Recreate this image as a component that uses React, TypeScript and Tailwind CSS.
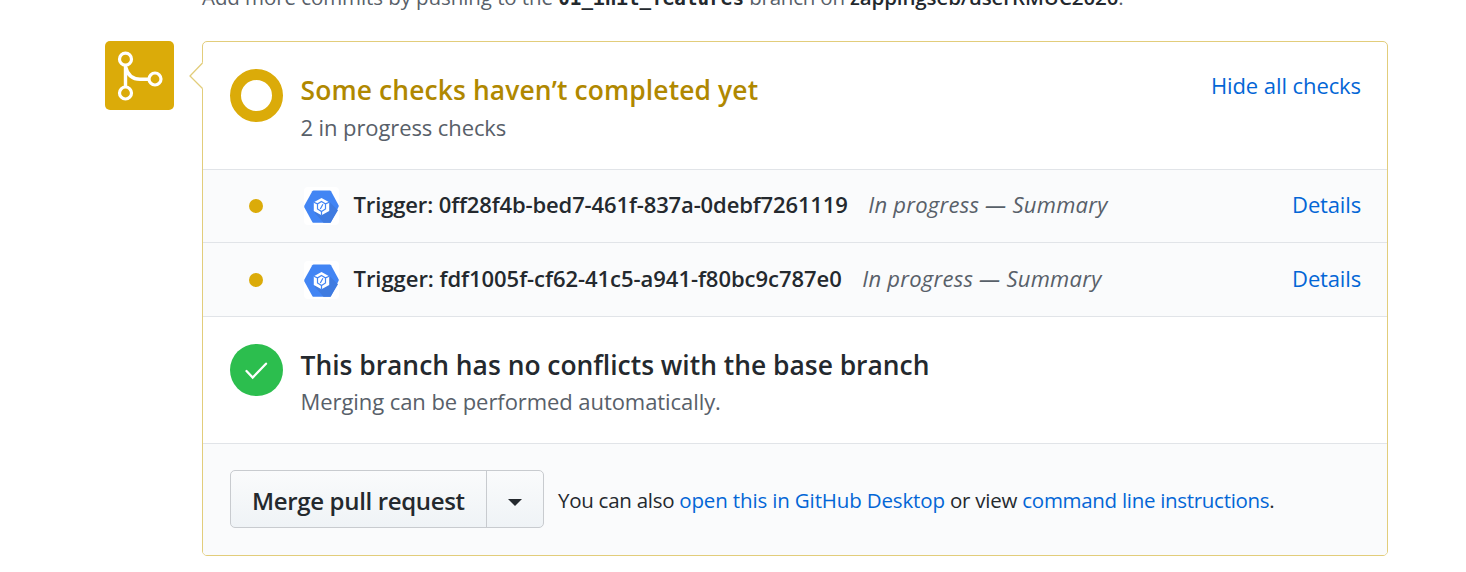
const font = "font-['Segoe_UI','Open_Sans','Noto_Sans',sans-serif]";

function MergeIcon() {
  return (
    <svg width="69" height="69" viewBox="0 0 69 69" fill="none" stroke="#fff">
      <circle cx="20.5" cy="18.2" r="6" strokeWidth="3.2" />
      <circle cx="20.5" cy="52" r="6" strokeWidth="3.2" />
      <circle cx="50" cy="38" r="6" strokeWidth="3.2" />
      <path d="M20.5 25v20.5M20.5 25.5C22.500 34 28 38.200 35 38.200H43.500" strokeWidth="3.4" />
    </svg>
  );
}

function BuildIcon() {
  return (
    <svg width="35" height="38" viewBox="0 0 35 38" className="shrink-0">
      <rect width="35" height="38" rx="4" fill="#fff" />
      <path d="M9.600 3.500H25.800Q26.500 3.500 27 4.300L34.600 18.200Q35 19 34.600 19.800L27 34.900Q26.500 35.800 25.800 35.800H9.600Q8.800 35.800 8.300 34.900L.4 20.400Q0 19.500.4 18.600L8.300 4.300Q8.800 3.500 9.600 3.500Z" fill="#4285f4" />
      <path d="M25 14.500L34 23.300L27 34.900Q26.500 35.800 25.800 35.800H19.500L10.500 25.500Z" fill="#3f7be0" />
      <path d="M17.500 11L25.200 15.300V23.900L17.500 28.200L9.800 23.900V15.300Z" fill="#fff" />
      <path d="M17.500 14.500L21.500 16.900V22L17.500 24.600L13.500 22V16.900ZM9.800 15.300L13.500 16.900M25.200 15.300L21.500 16.900M17.500 24.600V28.500M16.300 22L18.900 17.200" fill="none" stroke="#4285f4" strokeWidth="1.200" />
    </svg>
  );
}

function CheckRow({ id, idClass, heightClass }: { id: string; idClass: string; heightClass: string }) {
  return (
    <div className={`flex items-center border-t border-[#e1e4e8] bg-[#fafbfc] pl-[46px] pr-[26px] ${heightClass}`}>
      <span className="size-[14px] rounded-full bg-[#dbab09]" />
      <span className="ml-[41px]"><BuildIcon /></span>
      <span className={`-mt-[3px] ml-[14.5px] text-[22px] font-semibold text-[#24292e] ${idClass}`}>Trigger: {id}</span>
      <span className="-mt-[3px] ml-[20.5px] text-[22px] italic tracking-[0.25px] text-[#586069]">In progress — Summary</span>
      <a className="-mt-[3px] ml-auto text-[22px] tracking-[-0.15px] text-[#0366d6]">Details</a>
    </div>
  );
}

export default function App() {
  return (
    <div className={`flex h-[572px] w-[1466px] flex-col overflow-hidden whitespace-nowrap bg-white ${font}`}>
      <div className="h-[41px] shrink-0 pl-[202px]">
        <p className="-mt-[19px] text-[20.5px] leading-[32px] text-[#586069]">
          <span className="tracking-[-0.08px]">Add more commits by pushing to the </span>
          <span className="font-['DejaVu_Sans_Mono',monospace] text-[19.3px] font-bold text-[#24292e]">01_init_features</span>
          <span className="tracking-[-0.2px]"> branch on </span>
          <span className="font-semibold tracking-[-0.1px] text-[#24292e]">zappingseb/userRMUC2020</span>.
        </p>
      </div>
      <div className="flex pl-[105px]">
        <div className="size-[69px] rounded-[5px] bg-[#dbab09]"><MergeIcon /></div>
        <div className="relative ml-[28px] h-[515px] w-[1186px] rounded-[5px] border border-[#e2cd7b] bg-white">
          <svg className="absolute -left-[14px] top-[19px]" width="15" height="30" viewBox="0 0 15 30">
            <path d="M15 1.500H13.500V2L1 15L13.500 27.500H15Z" fill="#fff" />
            <path d="M13.500 2L1 15L13.500 27.500" fill="none" stroke="#e2cd7b" strokeWidth="1.300" />
          </svg>
          <div className="flex h-[127px] pl-[27px] pr-[26px] pt-[27px]">
            <span className="size-[53px] rounded-full border-[11px] border-[#dbab09]" />
            <div className="ml-[17.5px] pt-[3px]">
              <h3 className="text-[26.4px] font-semibold leading-[37px] tracking-[0.13px] text-[#b08800]">Some checks haven’t completed yet</h3>
              <p className="text-[22px] leading-[37px] tracking-[-0.1px] text-[#586069]">2 in progress checks</p>
            </div>
            <a className="ml-auto text-[22px] leading-[33px] tracking-[-0.08px] text-[#0366d6]">Hide all checks</a>
          </div>
          <CheckRow id="0ff28f4b-bed7-461f-837a-0debf7261119" idClass="tracking-[-0.13px]" heightClass="h-[73px]" />
          <CheckRow id="fdf1005f-cf62-41c5-a941-f80bc9c787e0" idClass="tracking-[-0.04px]" heightClass="h-[74px]" />
          <div className="flex h-[127px] border-t border-[#e1e4e8] pl-[27px] pt-[27px]">
            <span className="flex h-[52px] w-[53px] items-center justify-center rounded-full bg-[#2cbe4e]">
              <svg width="53" height="52" viewBox="0 0 53 52"><path d="M16.5 27L22.700 33.500L36 19.700" fill="none" stroke="#fff" strokeWidth="2.300" strokeLinecap="round" /></svg>
            </span>
            <div className="ml-[17.5px] pt-[3px]">
              <h3 className="text-[26.4px] font-semibold leading-[36px] text-[#24292e]">This branch has no conflicts with the base branch</h3>
              <p className="text-[22px] leading-[36px] tracking-[-0.07px] text-[#586069]">Merging can be performed automatically.</p>
            </div>
          </div>
          <div className="flex h-[112px] rounded-b-[4px] border-t border-[#e1e4e8] bg-[#fafbfc] pl-[27px] pt-[26px]">
            <div className="flex h-[58px] w-[314px] rounded-[5px] border border-[#c8cbcf] bg-linear-to-b from-[#fafbfc] to-[#eff3f6]">
              <button className="w-[256px] border-r border-[#c8cbcf] pl-[21px] pt-[3px] text-left text-[24px] font-semibold tracking-[-0.34px] text-[#24292e]">Merge pull request</button>
              <button className="flex flex-1 items-center justify-center pt-[7px]">
                <svg width="14" height="7" viewBox="0 0 14 7"><path d="M0 0H14L7 7Z" fill="#24292e" /></svg>
              </button>
            </div>
            <p className="ml-[14px] text-[20.5px] leading-[60px] tracking-[-0.22px] text-[#24292e]">
              <span className="tracking-[-0.27px]">You can also </span>
              <a className="tracking-[-0.15px] text-[#0366d6]">open this in GitHub Desktop</a>
              <span> or view </span>
              <a className="tracking-[-0.3px] text-[#0366d6]">command line instructions</a>.
            </p>
          </div>
        </div>
      </div>
    </div>
  );
}
